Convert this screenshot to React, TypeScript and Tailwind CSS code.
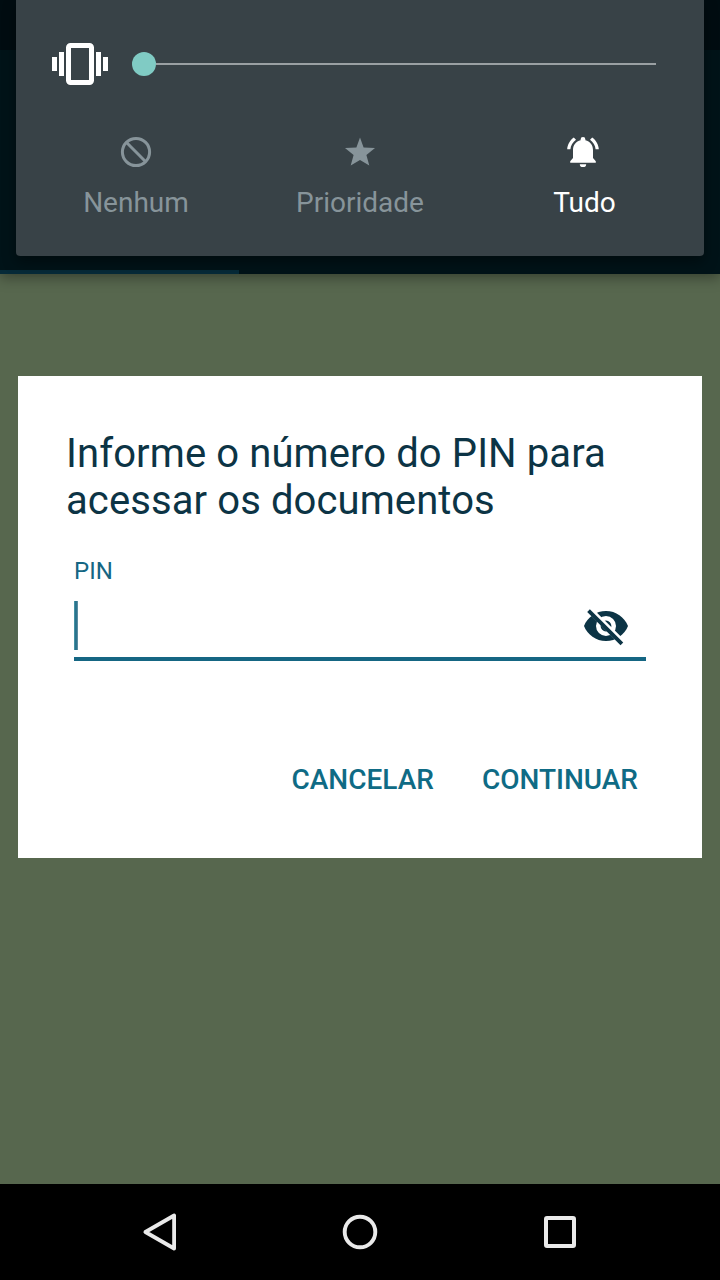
function VolumePanel() {
  return (
    <div className="absolute inset-x-4 top-0 z-20 h-64 rounded-b bg-[#384247] shadow-[0_6px_14px_rgba(0,0,0,0.4)]">
      <div className="flex h-32 items-center pl-9 pr-12">
        <svg className="h-[42px] w-14 text-white" viewBox="0 0 56 42" fill="currentColor">
          <rect x="0" y="14" width="5" height="14" />
          <rect x="7" y="9" width="5" height="24" />
          <rect x="16.5" y="2.5" width="23" height="37" rx="2" fill="none" stroke="currentColor" strokeWidth="5" />
          <rect x="44" y="9" width="5" height="24" />
          <rect x="51" y="14" width="5" height="14" />
        </svg>
        <div className="ml-6 flex flex-1 items-center">
          <div className="size-6 rounded-full bg-[#80cbc4]" />
          <div className="h-0.5 flex-1 bg-[#9aa0a3]" />
        </div>
      </div>
      <div className="grid grid-cols-3 px-2 text-[28px] leading-8 text-[#87949a]">
        <div className="flex flex-col items-center">
          <svg className="mt-2 size-8" viewBox="0 0 32 32" fill="none" stroke="currentColor" strokeWidth="3">
            <circle cx="16" cy="16" r="13.6" />
            <path d="M6.3 6.3 25.7 25.7" />
          </svg>
          <span className="mt-[19px]">Nenhum</span>
        </div>
        <div className="flex flex-col items-center">
          <svg className="mt-2 size-8" viewBox="0 0 32 32" fill="currentColor">
            <path d="M16 1.5 19.6 11.5 31 12 22.4 18.9 25.3 29.5 16 24 6.7 29.5 9.6 18.9 1 12 12.4 11.5Z" />
          </svg>
          <span className="mt-[19px]">Prioridade</span>
        </div>
        <div className="flex flex-col items-center text-white">
          <svg className="mt-2 mr-0.5 h-8 w-[34px]" viewBox="0 0 34 32" fill="currentColor">
            <path d="M10 3.7 7.8 1.4C4 4.1 1.4 8.5 1.2 13.3h3.2C4.7 9.4 6.8 5.9 10 3.7Z" />
            <path d="M24 3.7 26.2 1.4c3.8 2.7 6.4 7.1 6.6 11.9h-3.2C29.3 9.4 27.2 5.9 24 3.7Z" />
            <path d="M27 14c0-4.8-3-8.6-7.6-9.7v-.9a2.4 2.4 0 0 0-4.8 0v.9C10 5.4 7 9.2 7 14v8l-2.8 3.2v1.5h25.6v-1.5L27 22Z" />
            <path d="M13.8 28.2h6.4a3.2 2.9 0 0 1-6.4 0Z" />
          </svg>
          <span className="mt-[19px] ml-px">Tudo</span>
        </div>
      </div>
    </div>
  );
}

function HiddenEye() {
  return (
    <svg className="size-12" viewBox="0 0 24 24">
      <path
        fill="#0c3445"
        fillRule="evenodd"
        d="M12 4.5C7 4.5 2.73 7.61 1 12c1.73 4.39 6 7.5 11 7.5s9.27-3.11 11-7.5c-1.73-4.39-6-7.5-11-7.5ZM12 17a5 5 0 1 1 0-10 5 5 0 0 1 0 10Zm0-7.7a2.7 2.7 0 1 0 0 5.4 2.7 2.7 0 0 0 0-5.4Z"
      />
      <path fill="#fff" d="M2 4.27 19.73 22l2.2-2.2L4.2 2.07Z" />
      <path stroke="#0c3445" strokeWidth="1.9" d="M3.27 4.27 19.94 20.94" />
    </svg>
  );
}

function PinDialog() {
  return (
    <div className="mx-[18px] mt-[102px] h-[482px] bg-white px-12 pt-[54px]">
      <h1 className="text-[40px] leading-[47px] tracking-[0.1px] text-[#0c3445]">
        Informe o número do PIN para
        <br />
        acessar os documentos
      </h1>
      <div className="mx-2 mt-[33px] text-[#156683]">
        <label className="block text-2xl leading-7">PIN</label>
        <div className="mt-1.5 flex h-[70px] items-center justify-between border-b-4 border-[#156683] pt-1 pr-4">
          <div className="mb-[7px] h-[49px] w-1 self-end bg-linear-to-r from-[#559fae] via-[#156683] to-[#6c9bab]" />
          <HiddenEye />
        </div>
      </div>
      <div className="mt-[103px] flex justify-end gap-12 pr-4 text-[28px] leading-8 font-medium text-[#0f6b85]">
        <button>CANCELAR</button>
        <button>CONTINUAR</button>
      </div>
    </div>
  );
}

export default function App() {
  return (
    <div className="relative flex h-[1280px] w-[720px] flex-col overflow-hidden bg-[#57674e] font-['Roboto',sans-serif]">
      <header className="flex h-[274px] flex-col bg-[#001318] shadow-[0_4px_12px_rgba(0,0,0,0.35)]">
        <div className="h-[50px] bg-[#000c11]" />
        <div className="mt-auto h-1 w-[239px] bg-[#062a38]" />
      </header>
      <VolumePanel />

      <main className="flex-1">
        <PinDialog />
      </main>

      <nav className="flex h-24 items-center justify-center gap-[152px] bg-black text-[#eaeaea]">
        <svg className="size-12" viewBox="0 0 48 48" fill="none" stroke="currentColor" strokeWidth="3.8" strokeLinejoin="round">
          <path d="M38.1 7.5V40.5L9.4 24Z" />
        </svg>
        <svg className="size-12" viewBox="0 0 48 48" fill="none" stroke="currentColor" strokeWidth="3.9">
          <circle cx="24" cy="24" r="15.3" />
        </svg>
        <svg className="size-12" viewBox="0 0 48 48" fill="none" stroke="currentColor" strokeWidth="4">
          <rect x="10" y="10" width="28" height="28" rx="1" />
        </svg>
      </nav>
    </div>
  );
}
